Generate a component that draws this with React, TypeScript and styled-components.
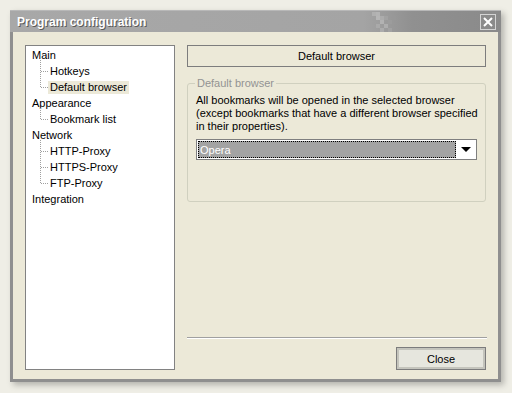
import styled, { createGlobalStyle } from "styled-components";

const GlobalStyle = createGlobalStyle`
  html, body {
    margin: 0;
    padding: 0;
    background: #efeee6;
    font-family: "Liberation Sans", Arial, sans-serif;
    font-size: 11px;
    color: #000;
  }
`;

const Page = styled.div`
  width: 512px;
  height: 393px;
  padding: 10px 0 0 10px;
  box-sizing: border-box;
`;

const Window = styled.div`
  width: 491px;
  height: 372px;
  box-sizing: border-box;
  border: 3px solid #8f8f8f;
  border-top: none;
  background: #ece9d8;
  display: flex;
  flex-direction: column;
  box-shadow: 3px 3px 6px rgba(0, 0, 0, 0.25);
`;

const TitleBar = styled.div`
  height: 22px;
  margin: 0 -3px;
  padding: 0 5px 0 7px;
  display: flex;
  align-items: center;
  background: linear-gradient(to right, #a8a8a8 0%, #a4a4a4 72%, #909090 82%, #8a8a8a 100%);
  border-top: 1px solid #b8b8b8;
  box-sizing: border-box;
`;

const Title = styled.span`
  flex: 1;
  font-weight: bold;
  font-size: 12px;
  color: #fff;
  text-shadow: 1px 1px 0 #5a5a5a;
`;

const Checker = styled.svg`
  margin-right: 84px;
`;

const CloseBox = styled.svg`
  display: block;
`;

const Body = styled.div`
  flex: 1;
  display: flex;
  gap: 12px;
  padding: 13px 12px 9px 12px;
  min-height: 0;
`;

const Tree = styled.div`
  width: 150px;
  flex-shrink: 0;
  box-sizing: border-box;
  background: #fff;
  border: 1px solid #828282;
  padding-top: 1px;
`;

const ParentRow = styled.div`
  height: 16px;
  line-height: 16px;
  padding-left: 6px;
`;

const ChildRow = styled.div<{ $last?: boolean }>`
  position: relative;
  height: 16px;
  display: flex;
  align-items: center;
  padding-left: 22px;

  &::before {
    content: "";
    position: absolute;
    left: 14px;
    top: -3px;
    height: ${(p) => (p.$last ? "11px" : "19px")};
    border-left: 1px dotted #a0a0a0;
  }
  &::after {
    content: "";
    position: absolute;
    left: 15px;
    top: 8px;
    width: 7px;
    border-top: 1px dotted #a0a0a0;
  }
`;

const Label = styled.span<{ $selected?: boolean }>`
  padding: 0 2px;
  line-height: 13px;
  background: ${(p) => (p.$selected ? "#ece9d8" : "transparent")};
`;

const Column = styled.div`
  flex: 1;
  min-width: 0;
  display: flex;
  flex-direction: column;
`;

const Header = styled.div`
  height: 22px;
  border: 1px solid #7d7d7d;
  box-sizing: border-box;
  display: flex;
  align-items: center;
  justify-content: center;
`;

const Group = styled.fieldset`
  margin: 10px 0 0 0;
  padding: 4px 7px 0 8px;
  height: 125px;
  box-sizing: border-box;
  border: 1px solid #d0d0bf;
  border-radius: 3px;
  min-width: 0;
`;

const Legend = styled.legend`
  color: #939393;
  padding: 0 2px;
  margin-left: -1px;
  line-height: 13px;
`;

const Description = styled.p`
  margin: 0;
  line-height: 13px;
  white-space: nowrap;
`;

const Select = styled.div`
  margin-top: 6px;
  margin-right: 1px;
  height: 21px;
  box-sizing: border-box;
  border: 1px solid #7f7f7f;
  background: #fff;
  display: flex;
  padding: 1px;
`;

const SelectValue = styled.div`
  flex: 1;
  background: #a3a3a3;
  color: #fff;
  border: 1px dotted #000;
  display: flex;
  align-items: center;
  padding-left: 1px;
`;

const Arrow = styled.div`
  width: 19px;
  display: flex;
  align-items: center;
  justify-content: center;

  &::before {
    content: "";
    border-left: 5px solid transparent;
    border-right: 5px solid transparent;
    border-top: 5px solid #000;
  }
`;

const Spacer = styled.div`
  flex: 1;
`;

const Separator = styled.div`
  height: 0;
  border-top: 1px solid #a0a0a0;
  border-bottom: 1px solid #fff;
  margin-right: -1px;
`;

const Footer = styled.div`
  display: flex;
  justify-content: flex-end;
  margin-top: 8px;
`;

const Button = styled.button`
  width: 90px;
  height: 23px;
  font-family: inherit;
  font-size: 11px;
  color: #000;
  background: #e6e6de;
  border: 1px solid #7c7c7c;
  box-shadow: inset 0 0 0 2px #c4c4bc;
  padding: 0;
`;

const children = (items: string[], selected?: string) =>
  items.map((item, i) => (
    <ChildRow key={item} $last={i === items.length - 1}>
      <Label $selected={item === selected}>{item}</Label>
    </ChildRow>
  ));

export default function App() {
  const checker = [
    [0, 0, "#b0b0b0"], [4, 0, "#b4b4b4"], [8, 4, "#acacac"], [4, 4, "#b6b6b6"],
    [12, 4, "#a2a2a2"], [8, 8, "#b2b2b2"], [16, 8, "#9c9c9c"], [4, 12, "#aaaaaa"],
    [12, 12, "#aeaeae"], [20, 4, "#989898"], [16, 16, "#a2a2a2"], [8, 16, "#acacac"],
  ] as const;

  return (
    <>
      <GlobalStyle />
      <Page>
        <Window>
          <TitleBar>
            <Title>Program configuration</Title>
            <Checker width="24" height="20" viewBox="0 0 24 20">
              {checker.map(([x, y, c], i) => (
                <rect key={i} x={x} y={y} width="4" height="4" fill={c} />
              ))}
            </Checker>
            <CloseBox width="16" height="16" viewBox="0 0 16 16">
              <rect x="0.5" y="0.5" width="15" height="15" fill="none" stroke="#d4d4d4" />
              <path d="M4 4 L12 12 M12 4 L4 12" stroke="#fff" strokeWidth="2" />
            </CloseBox>
          </TitleBar>
          <Body>
            <Tree>
              <ParentRow>Main</ParentRow>
              {children(["Hotkeys", "Default browser"], "Default browser")}
              <ParentRow>Appearance</ParentRow>
              {children(["Bookmark list"])}
              <ParentRow>Network</ParentRow>
              {children(["HTTP-Proxy", "HTTPS-Proxy", "FTP-Proxy"])}
              <ParentRow>Integration</ParentRow>
            </Tree>
            <Column>
              <Header>Default browser</Header>
              <Group>
                <Legend>Default browser</Legend>
                <Description>
                  All bookmarks will be opened in the selected browser
                  <br />
                  (except bookmarks that have a different browser specified
                  <br />
                  in their properties).
                </Description>
                <Select>
                  <SelectValue>Opera</SelectValue>
                  <Arrow />
                </Select>
              </Group>
              <Spacer />
              <Separator />
              <Footer>
                <Button>Close</Button>
              </Footer>
            </Column>
          </Body>
        </Window>
      </Page>
    </>
  );
}
